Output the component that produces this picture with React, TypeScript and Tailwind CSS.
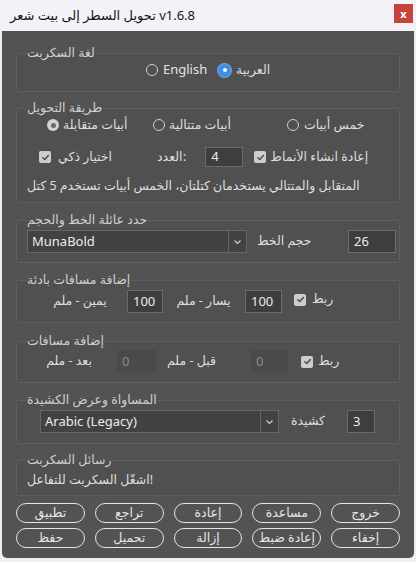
import React from "react";

function Radio({ kind }: { kind: "off" | "blue" | "gray" }) {
  if (kind === "blue")
    return (
      <span className="flex h-[13px] w-[13px] shrink-0 items-center justify-center rounded-full bg-[#3f8fe4] ring-1 ring-[#6aa8ec]">
        <span className="h-[4px] w-[4px] rounded-full bg-white" />
      </span>
    );
  if (kind === "gray")
    return (
      <span className="flex h-[12px] w-[12px] shrink-0 items-center justify-center rounded-full bg-[#d2d2d2]">
        <span className="h-[5px] w-[5px] rounded-full bg-[#6b6b6b]" />
      </span>
    );
  return <span className="h-[12px] w-[12px] shrink-0 rounded-full border-[1.5px] border-[#cfcfcf]" />;
}

function Check() {
  return (
    <span className="flex h-[12px] w-[12px] shrink-0 items-center justify-center rounded-[2px] bg-[#cdcdcd]">
      <svg width="9" height="9" viewBox="0 0 10 10">
        <path d="M2 5.2 L4.2 7.3 L8.2 2.8" fill="none" stroke="#4b4b4b" strokeWidth="1.6" strokeLinecap="round" strokeLinejoin="round" />
      </svg>
    </span>
  );
}

function Field({ title, className, children }: { title: string; className?: string; children: React.ReactNode }) {
  return (
    <fieldset className={"rounded-[2px] border border-[#5f5f5f] bg-[#505050] " + (className ?? "")}>
      <legend className="ml-[10px] px-0 text-[12.5px] leading-[16px] text-[#cfcfcf] whitespace-nowrap">{title}</legend>
      {children}
    </fieldset>
  );
}

function Box({ value, className, dim }: { value: string; className: string; dim?: boolean }) {
  return (
    <div
      className={
        "flex items-center pl-[5px] text-[13px] " +
        (dim ? "bg-[#4a4a4a] text-[#8c8c8c] " : "border border-[#6c6c6c] bg-[#3e3e3e] text-[#ececec] ") +
        className
      }
    >
      {value}
    </div>
  );
}

function Dropdown({ value, className, divider }: { value: string; className: string; divider: string }) {
  return (
    <div className={"flex items-stretch border border-[#666666] bg-[#424242] " + className}>
      <div className="flex flex-1 items-center pl-[4px] text-[13px] text-[#ececec]">{value}</div>
      <div className={"flex items-center justify-center border-l border-[#666666] " + divider}>
        <svg width="9" height="6" viewBox="0 0 9 6">
          <path d="M1.5 1.5 L4.5 4.5 L7.5 1.5" fill="none" stroke="#cfcfcf" strokeWidth="1.2" />
        </svg>
      </div>
    </div>
  );
}

function Btn({ label }: { label: string }) {
  return (
    <div className="flex h-[20px] w-[70px] items-center justify-center rounded-full border-[1.5px] border-[#e6e6e6] text-[12.5px] leading-none text-[#e6e6e6] whitespace-nowrap">
      {label}
    </div>
  );
}

export default function App() {
  const lbl = "text-[12.5px] text-[#dedede] whitespace-nowrap";
  return (
    <div className="flex h-[562px] w-[416px] flex-col bg-[#efefef] px-[2px] pb-[4px] font-['Noto_Sans','DejaVu_Sans',sans-serif]">
      <div className="-mx-[2px] flex h-[31px] shrink-0 items-center justify-between bg-[#f3f3f7] pl-[10px] pr-[3px]">
        <div dir="ltr" className="text-[13px] text-[#151515] whitespace-nowrap">تحويل السطر إلى بيت شعر v1.6.8</div>
        <div className="mb-[4px] flex h-[19px] w-[19px] items-center justify-center bg-[#c7443e] text-[11px] font-bold leading-none text-white">
          x
        </div>
      </div>
      <div className="flex flex-1 flex-col rounded-b-[5px] bg-[#535353] px-[14px] pt-[14px]">
        {/* Panel 1 */}
        <Field title="لغة السكربت" className="pb-[12px]">
          <div className="flex h-[18px] items-center pl-[129px]">
            <div className="flex w-[72px] items-center gap-[5px]">
              <Radio kind="off" />
              <span className="text-[13px] text-[#e4e4e4]">English</span>
            </div>
            <div className="flex items-center gap-[5px]">
              <Radio kind="blue" />
              <span className={lbl}>العربية</span>
            </div>
          </div>
        </Field>

        {/* Panel 2 */}
        <Field title="طريقة التحويل" className="mt-[8px] pb-[7px]">
          <div className="flex h-[18px] items-center">
            <div className="ml-[30px] flex w-[106px] items-center gap-[4px]">
              <Radio kind="gray" />
              <span className={lbl}>أبيات متقابلة</span>
            </div>
            <div className="flex w-[134px] items-center gap-[4px]">
              <Radio kind="off" />
              <span className={lbl}>أبيات متتالية</span>
            </div>
            <div className="flex items-center gap-[5px]">
              <Radio kind="off" />
              <span className={lbl}>خمس أبيات</span>
            </div>
          </div>
          <div className="mt-[12px] flex h-[22px] items-center">
            <div className="ml-[22px]">
              <Check />
            </div>
            <span className={"ml-[6px] w-[56px] text-center " + lbl}>اختيار ذكي</span>
            <span className={"ml-[44px] w-[20px] text-center " + lbl}>العدد</span>
            <span className={"ml-[6px] " + lbl}>:</span>
            <Box value="4" className="ml-[19px] h-[20px] w-[38px]" />
            <div className="ml-[11px]">
              <Check />
            </div>
            <span className={"ml-[4px] " + lbl}>إعادة انشاء الأنماط</span>
          </div>
          <div className="mt-[9px] flex h-[18px] items-center pl-[10px]">
            <span className={lbl}>المتقابل والمتتالي يستخدمان كتلتان، الخمس أبيات تستخدم 5 كتل</span>
          </div>
        </Field>

        {/* Panel 3 */}
        <Field title="حدد عائلة الخط والحجم" className="mt-[9px] pb-[9px]">
          <div className="mt-[2px] flex h-[23px] items-center">
            <Dropdown value="MunaBold" className="ml-[10px] h-[23px] w-[220px]" divider="w-[18px]" />
            <span className={"ml-[10px] w-[53px] text-center " + lbl}>حجم الخط</span>
            <Box value="26" className="ml-[38px] h-[23px] w-[48px]" />
          </div>
        </Field>

        {/* Panel 4 */}
        <Field title="إضافة مسافات بادئة" className="mt-[9px] pb-[9px]">
          <div className="mt-[2px] flex h-[23px] items-center">
            <span className={"ml-[33px] w-[60px] text-center " + lbl}>يمين - ملم</span>
            <Box value="100" className="ml-[17px] h-[23px] w-[36px]" />
            <span className={"ml-[12px] w-[57px] text-center " + lbl}>يسار - ملم</span>
            <Box value="100" className="ml-[13px] h-[23px] w-[37px]" />
            <div className="mb-[4px] ml-[12px] flex items-center">
              <Check />
              <span className={"ml-[6px] " + lbl}>ربط</span>
            </div>
          </div>
        </Field>

        {/* Panel 5 */}
        <Field title="إضافة مسافات" className="mt-[10px] pb-[9px]">
          <div className="mt-[1px] flex h-[23px] items-center">
            <span className={"ml-[28px] w-[48px] text-center " + lbl}>بعد - ملم</span>
            <Box dim value="0" className="ml-[24px] h-[23px] w-[39px]" />
            <span className={"ml-[11px] w-[49px] text-center " + lbl}>قبل - ملم</span>
            <Box dim value="0" className="ml-[35px] h-[23px] w-[37px]" />
            <div className="ml-[13px] flex items-center">
              <Check />
              <span className={"ml-[5px] " + lbl}>ربط</span>
            </div>
          </div>
        </Field>

        {/* Panel 6 */}
        <Field title="المساواة وعرض الكشيدة" className="mt-[9px] pb-[10px]">
          <div className="mt-[2px] flex h-[23px] items-center">
            <Dropdown value="Arabic (Legacy)" className="ml-[23px] h-[23px] w-[239px]" divider="w-[18px]" />
            <span className={"ml-[11px] w-[36px] text-center " + lbl}>كشيدة</span>
            <Box value="3" className="ml-[21px] h-[23px] w-[28px]" />
          </div>
        </Field>

        {/* Panel 7 */}
        <Field title="رسائل السكربت" className="mt-[8px] pb-[6px]">
          <div className="mt-[3px] flex h-[18px] items-center pl-[10px]">
            <span dir="ltr" className={lbl}>اشغّل السكربت للتفاعل!</span>
          </div>
        </Field>

        <div className="mt-[7px] flex justify-center gap-[10px]">
          <Btn label="تطبيق" />
          <Btn label="تراجع" />
          <Btn label="إعادة" />
          <Btn label="مساعدة" />
          <Btn label="خروج" />
        </div>
        <div className="mt-[5px] flex justify-center gap-[10px]">
          <Btn label="حفظ" />
          <Btn label="تحميل" />
          <Btn label="إزالة" />
          <Btn label="إعادة ضبط" />
          <Btn label="إخفاء" />
        </div>
      </div>
    </div>
  );
}
